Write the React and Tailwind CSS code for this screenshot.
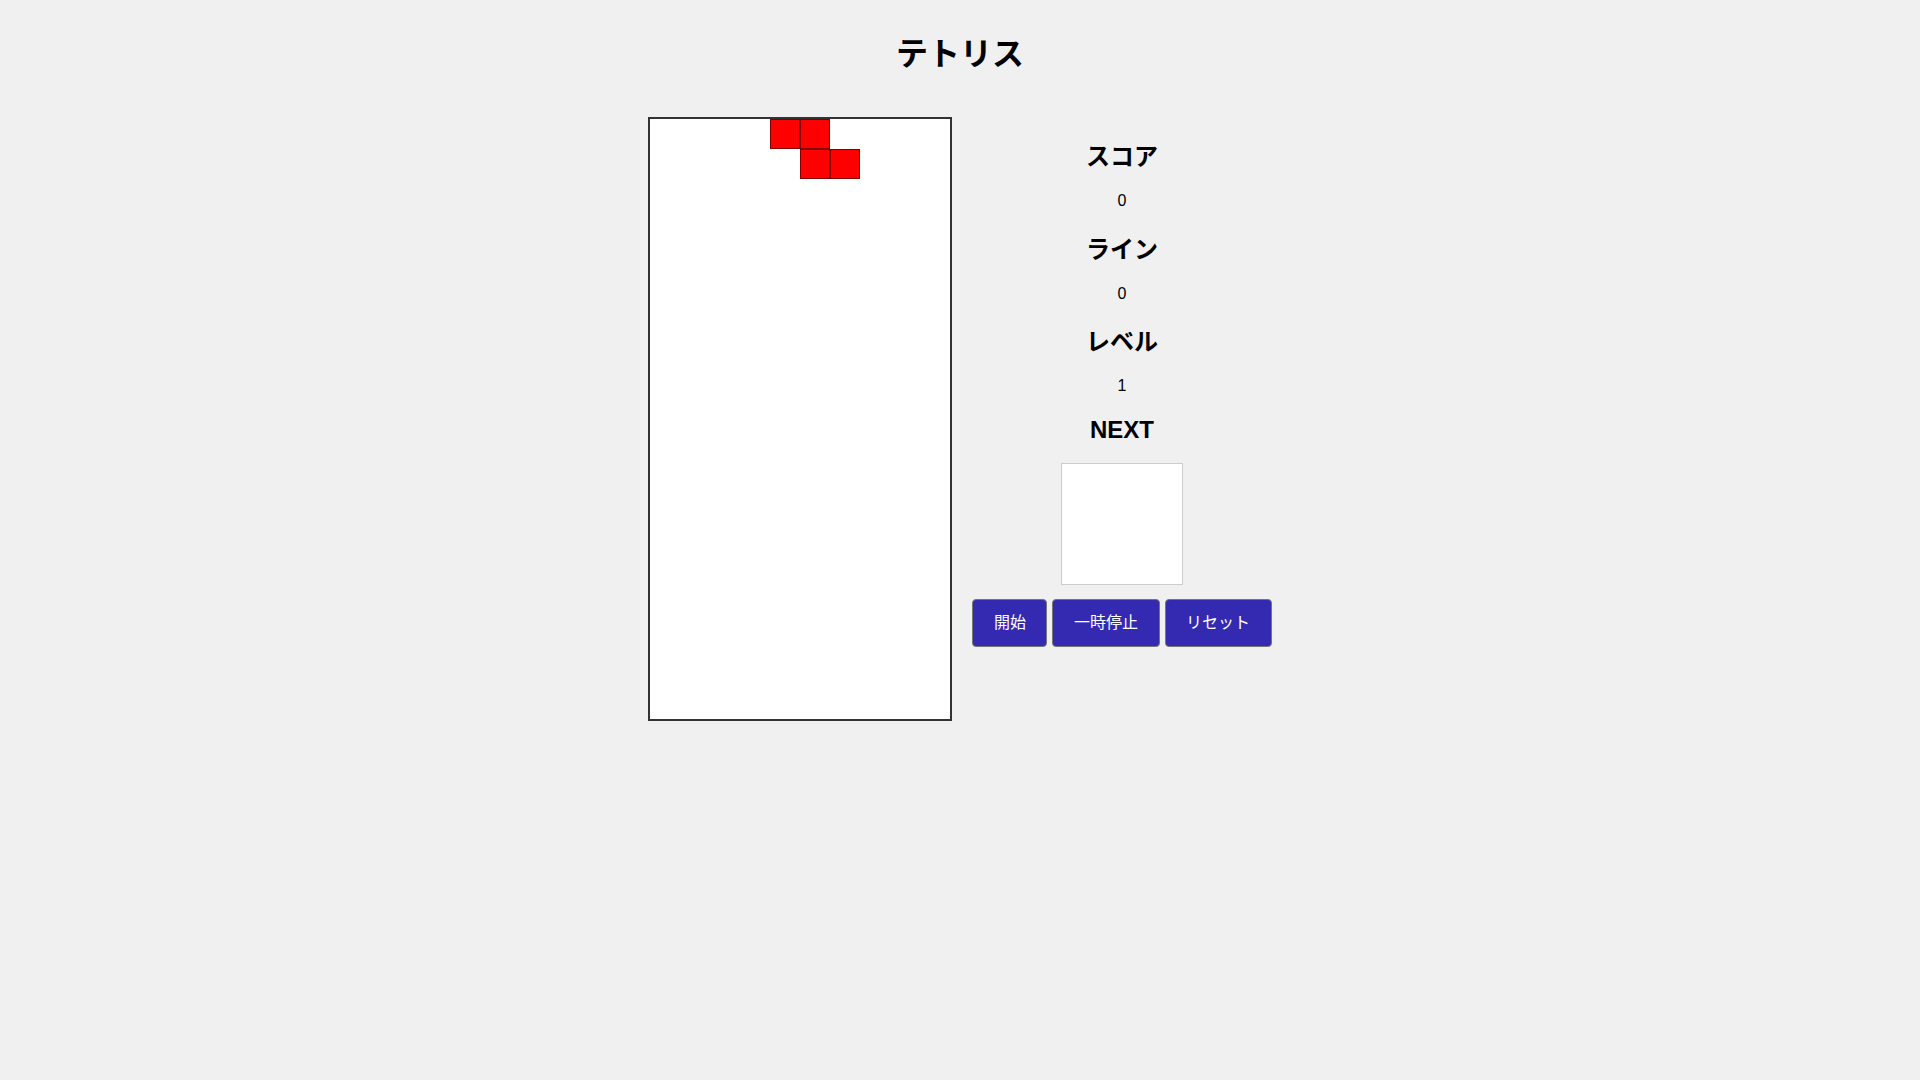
import React from "react";

const filled = new Set(["0-4", "0-5", "1-5", "1-6"]);

function Stat({ label, value }) {
  return (
    <div className="flex flex-col items-center">
      <h2 className="text-[24px] leading-[36px] font-bold text-black">{label}</h2>
      <p className="mt-[14px] text-[16px] leading-[24px] text-black">{value}</p>
    </div>
  );
}

export default function App() {
  const cells = [];
  for (let r = 0; r < 20; r++) {
    for (let c = 0; c < 10; c++) {
      const key = `${r}-${c}`;
      cells.push(
        filled.has(key) ? (
          <div key={key} className="bg-[#ff0000] border border-black/50" />
        ) : (
          <div key={key} />
        )
      );
    }
  }

  const btn =
    "h-[48px] px-[20.5px] text-[16px] text-white bg-[#3429b1] border border-[#767676] rounded-[4px]";

  return (
    <div className="min-h-screen bg-[#f0f0f0] font-['Liberation_Sans','Noto_Sans_CJK_JP',sans-serif] flex flex-col items-center">
      <h1 className="mt-[34px] text-[32px] leading-[40px] font-bold text-black">テトリス</h1>
      <div className="mt-[43px] flex items-start gap-[20px]">
        <div className="w-[304px] h-[604px] border-2 border-[#333] bg-white grid grid-cols-[repeat(10,30px)] grid-rows-[repeat(20,30px)]">
          {cells}
        </div>
        <div className="w-[300px] flex flex-col items-center pt-[22px]">
          <div className="flex flex-col items-center gap-[18.5px]">
            <Stat label="スコア" value="0" />
            <Stat label="ライン" value="0" />
            <Stat label="レベル" value="1" />
          </div>
          <h2 className="mt-[14px] text-[24px] leading-[36px] font-bold text-black">NEXT</h2>
          <div className="mt-[15px] w-[122px] h-[122px] border border-[#ccc] bg-white" />
          <div className="mt-[14px] flex gap-[5px]">
            <button className={btn}>開始</button>
            <button className={btn}>一時停止</button>
            <button className={btn}>リセット</button>
          </div>
        </div>
      </div>
    </div>
  );
}
